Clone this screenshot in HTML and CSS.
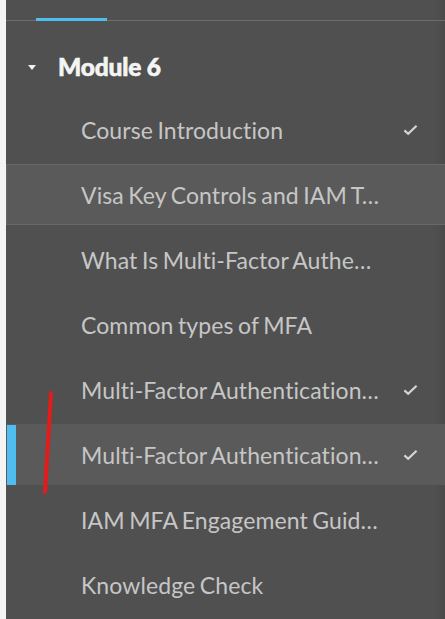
FILE: index.html
```html
<!DOCTYPE html>
<html lang="en">
<head>
<meta charset="utf-8">
<title>Module 6</title>
<link rel="stylesheet" href="styles.css">
</head>
<body>
<div class="page">
  <div class="edge"></div>
  <nav class="sidebar">
    <div class="tabs"><span class="tab-active"></span></div>
    <div class="module">
      <span class="caret"></span>
      <span class="module-title">Module 6</span>
    </div>
    <ul class="items">
      <li class="item"><span class="label">Course Introduction</span><svg class="check" viewBox="0 0 16 12"><path d="M1.5 6.5 L5.5 10 L14.5 1.5" /></svg></li>
      <li class="item hover"><span class="label">Visa Key Controls and IAM Terminology</span></li>
      <li class="item"><span class="label">What Is Multi-Factor Authentication?</span></li>
      <li class="item"><span class="label">Common types of MFA</span></li>
      <li class="item"><span class="label">Multi-Factor Authentication Methods</span><svg class="check" viewBox="0 0 16 12"><path d="M1.5 6.5 L5.5 10 L14.5 1.5" /></svg></li>
      <li class="item active"><span class="label">Multi-Factor Authentication Best Practices</span><svg class="check" viewBox="0 0 16 12"><path d="M1.5 6.5 L5.5 10 L14.5 1.5" /></svg></li>
      <li class="item"><span class="label">IAM MFA Engagement Guidelines</span></li>
      <li class="item"><span class="label">Knowledge Check</span></li>
    </ul>
  </nav>
  <svg class="annotation" width="445" height="619" viewBox="0 0 445 619"><path d="M51 393 L45 492" /></svg>
</div>
</body>
</html>
```

FILE: styles.css
```css
html, body {
  margin: 0;
  padding: 0;
  background: #505050;
  font-family: "Lato", "Noto Sans", sans-serif;
}

.page {
  display: flex;
  width: 445px;
  height: 619px;
  overflow: hidden;
  position: relative;
}

.edge {
  width: 6px;
  flex: none;
  background: #f4f4f4;
}

.sidebar {
  flex: 1;
  background: linear-gradient(to right, #505050 0, #505050 428px, #4a4a4a 439px);
}

.tabs {
  height: 21px;
  box-sizing: border-box;
  border-bottom: 1px solid #6c6c6c;
  position: relative;
}

.tab-active {
  position: absolute;
  left: 30px;
  width: 71px;
  bottom: -1px;
  height: 3px;
  background: #4fbdf0;
}

.module {
  height: 78px;
  box-sizing: border-box;
  padding-top: 12px;
  display: flex;
  align-items: center;
}

.caret {
  margin-left: 22px;
  width: 0;
  height: 0;
  border-left: 4.5px solid transparent;
  border-right: 4.5px solid transparent;
  border-top: 5px solid #f2f2f2;
  margin-top: 3px;
}

.module-title {
  margin-left: 22px;
  color: #f4f4f4;
  font-size: 24.5px;
  font-weight: 900;
  letter-spacing: -0.2px;
  -webkit-text-stroke: 0.6px #f4f4f4;
}

.items {
  list-style: none;
  margin: 0;
  padding: 0;
  display: flex;
  flex-direction: column;
  gap: 4px;
}

.item {
  height: 61px;
  box-sizing: border-box;
  display: flex;
  align-items: center;
  padding-left: 75px;
  position: relative;
}

.item.hover {
  background: #5a5a5a;
  border: 1px solid #686868;
  border-right: none;
  padding-left: 74px;
}

.item.active {
  background: #5a5a5a;
}

.item.active::before {
  content: "";
  position: absolute;
  left: 1px;
  top: 1px;
  bottom: 0;
  width: 9px;
  background: #4fbdf0;
}

.label {
  width: 302px;
  color: #c6c6c6;
  font-size: 23px;
  letter-spacing: 0.1px;
  word-spacing: -1.5px;
  line-height: 28px;
  white-space: nowrap;
  overflow: hidden;
  text-overflow: ellipsis;
}

.check {
  margin-left: 20px;
  width: 15px;
  height: 12px;
  fill: none;
  stroke: #d4d4d4;
  stroke-width: 2.4;
}

.annotation {
  position: absolute;
  left: 0;
  top: 0;
  pointer-events: none;
}

.annotation path {
  stroke: #e41b1b;
  stroke-width: 4;
  stroke-linecap: round;
  fill: none;
}
```
